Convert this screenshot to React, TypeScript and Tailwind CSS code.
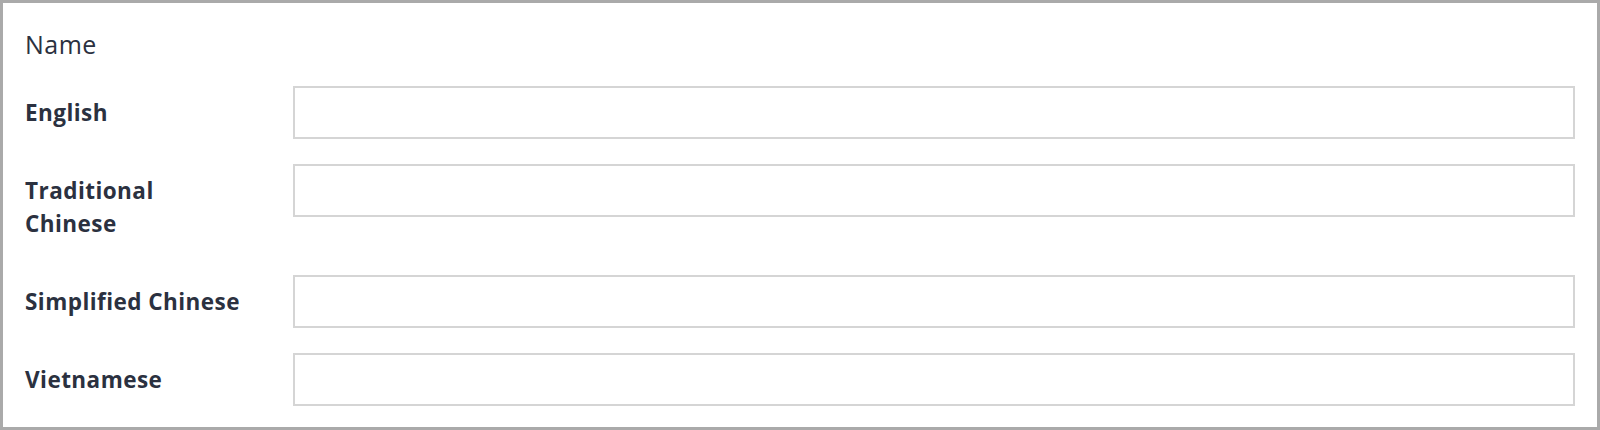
import React from 'react';

const fields = ['English', 'Traditional Chinese', 'Simplified Chinese', 'Vietnamese'];

export default function App() {
  return (
    <div className="h-[430px] w-[1600px] border-[3px] border-[#aaaaaa] bg-white pt-[25px] pr-[22px] pb-[22px] pl-[22px] font-['Open_Sans',sans-serif] text-[#2b3140]">
      <div className="flex flex-col gap-[25px]">
        <h2 className="text-[25px] leading-[33px] font-medium tracking-[0.02em]">Name</h2>
        {fields.map((label) => (
          <div key={label} className="flex items-start">
            <label className="w-[220px] shrink-0 py-[10px] text-[22.5px] leading-[33px] font-bold tracking-[0.02em]">
              {label}
            </label>
            <input
              type="text"
              className="ml-[48px] h-[53px] flex-1 border-2 border-[#d5d5d5] bg-white px-3 outline-none"
            />
          </div>
        ))}
      </div>
    </div>
  );
}
